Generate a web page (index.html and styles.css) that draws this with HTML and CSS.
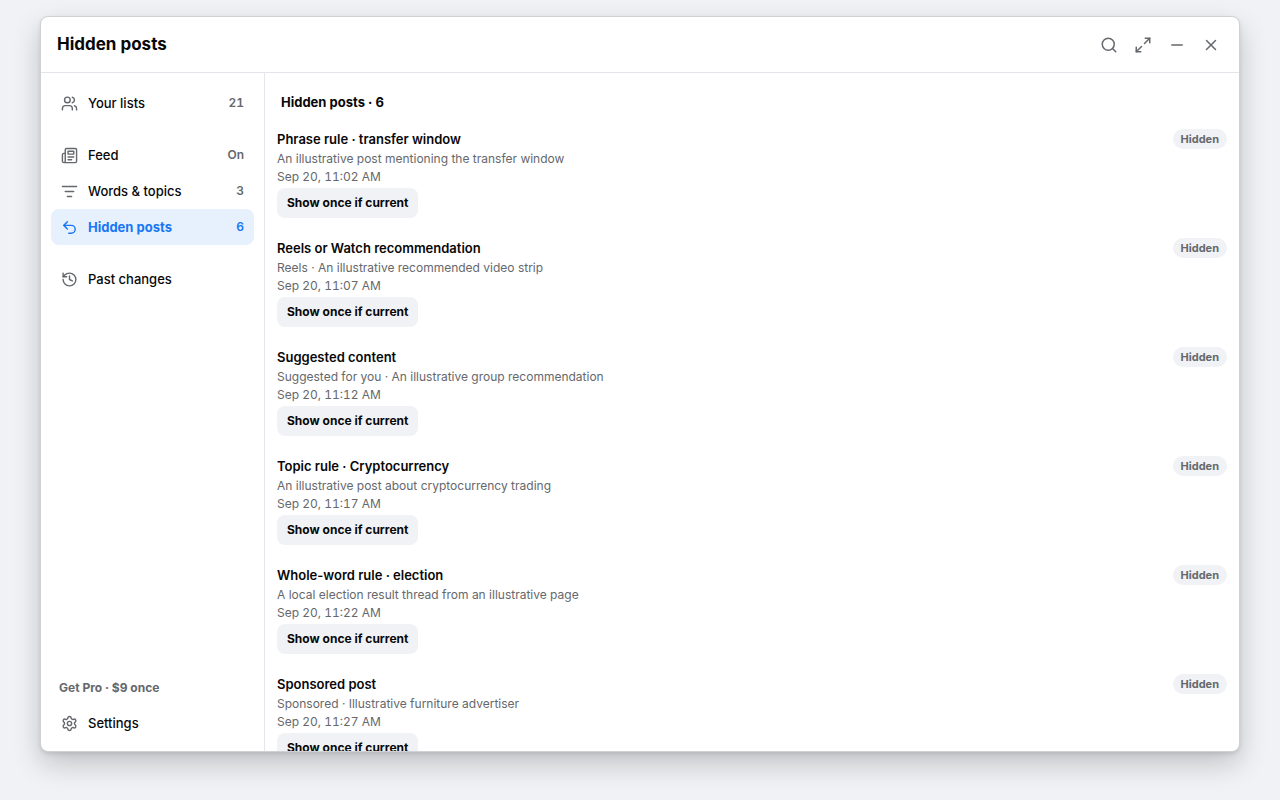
FILE: index.html
```
<!DOCTYPE html>
<html lang="en">
<head>
    <meta charset="UTF-8">
    <meta name="viewport" content="width=device-width, initial-scale=1.0">
    <title>Hidden posts</title>
    <link rel="stylesheet" href="styles.css">
</head>
<body>
    <div class="window">
        <header class="window-header">
            <h1>Hidden posts</h1>
            <div class="window-actions">
                <button class="icon-button" type="button" aria-label="Search">
                    <svg class="icon" viewBox="0 0 24 24"><circle cx="11" cy="11" r="8"/><path d="m21 21-4.3-4.3"/></svg>
                </button>
                <button class="icon-button" type="button" aria-label="Expand">
                    <svg class="icon" viewBox="0 0 24 24"><path d="M15 3h6v6"/><path d="M9 21H3v-6"/><path d="m21 3-7 7"/><path d="m3 21 7-7"/></svg>
                </button>
                <button class="icon-button" type="button" aria-label="Minimize">
                    <svg class="icon" viewBox="0 0 24 24"><path d="M5 12h14"/></svg>
                </button>
                <button class="icon-button" type="button" aria-label="Close">
                    <svg class="icon" viewBox="0 0 24 24"><path d="M18 6 6 18"/><path d="m6 6 12 12"/></svg>
                </button>
            </div>
        </header>

        <div class="window-body">
            <nav class="sidebar">
                <div class="nav-group">
                    <button class="nav-item" type="button">
                        <svg class="icon" viewBox="0 0 24 24"><path d="M16 21v-2a4 4 0 0 0-4-4H6a4 4 0 0 0-4 4v2"/><circle cx="9" cy="7" r="4"/><path d="M22 21v-2a4 4 0 0 0-3-3.870"/><path d="M16 3.130a4 4 0 0 1 0 7.750"/></svg>
                        <span class="nav-label">Your lists</span>
                        <span class="nav-value">21</span>
                    </button>
                </div>
                <div class="nav-group">
                    <button class="nav-item" type="button">
                        <svg class="icon" viewBox="0 0 24 24"><path d="M4 22h16a2 2 0 0 0 2-2V4a2 2 0 0 0-2-2H8a2 2 0 0 0-2 2v16a2 2 0 0 1-4 0v-9a2 2 0 0 1 2-2h2"/><path d="M18 14h-8"/><path d="M15 18h-5"/><path d="M10 6h8v4h-8z"/></svg>
                        <span class="nav-label">Feed</span>
                        <span class="nav-value">On</span>
                    </button>
                    <button class="nav-item" type="button">
                        <svg class="icon" viewBox="0 0 24 24"><path d="M2 5h20"/><path d="M6 12h12"/><path d="M9 19h6"/></svg>
                        <span class="nav-label">Words &amp; topics</span>
                        <span class="nav-value">3</span>
                    </button>
                    <button class="nav-item active" type="button" aria-current="page">
                        <svg class="icon" viewBox="0 0 24 24"><path d="M9 14 4 9l5-5"/><path d="M4 9h10.500a5.500 5.500 0 0 1 0 11H11"/></svg>
                        <span class="nav-label">Hidden posts</span>
                        <span class="nav-value">6</span>
                    </button>
                </div>
                <div class="nav-group">
                    <button class="nav-item" type="button">
                        <svg class="icon" viewBox="0 0 24 24"><path d="M3 12a9 9 0 1 0 9-9 9.750 9.750 0 0 0-6.740 2.740L3 8"/><path d="M3 3v5h5"/><path d="M12 7v5l4 2"/></svg>
                        <span class="nav-label">Past changes</span>
                    </button>
                </div>
                <div class="nav-footer">
                    <button class="pro-button" type="button">Get Pro · $9 once</button>
                    <button class="nav-item" type="button">
                        <svg class="icon" viewBox="0 0 24 24"><path d="M9.671 4.136a2.340 2.340 0 0 1 4.659 0 2.340 2.340 0 0 0 3.319 1.915 2.340 2.340 0 0 1 2.330 4.033 2.340 2.340 0 0 0 0 3.831 2.340 2.340 0 0 1-2.330 4.033 2.340 2.340 0 0 0-3.319 1.915 2.340 2.340 0 0 1-4.659 0 2.340 2.340 0 0 0-3.320-1.915 2.340 2.340 0 0 1-2.330-4.033 2.340 2.340 0 0 0 0-3.831A2.340 2.340 0 0 1 6.350 6.051a2.340 2.340 0 0 0 3.319-1.915"/><circle cx="12" cy="12" r="3"/></svg>
                        <span class="nav-label">Settings</span>
                    </button>
                </div>
            </nav>

            <main class="content">
                <h2>Hidden posts · 6</h2>
                <ul class="post-list">
                    <li class="post">
                        <div class="post-info">
                            <h3>Phrase rule · transfer window</h3>
                            <p>An illustrative post mentioning the transfer window</p>
                            <p class="post-date">Sep 20, 11:02 AM</p>
                            <button class="show-button" type="button">Show once if current</button>
                        </div>
                        <span class="badge">Hidden</span>
                    </li>
                    <li class="post">
                        <div class="post-info">
                            <h3>Reels or Watch recommendation</h3>
                            <p>Reels · An illustrative recommended video strip</p>
                            <p class="post-date">Sep 20, 11:07 AM</p>
                            <button class="show-button" type="button">Show once if current</button>
                        </div>
                        <span class="badge">Hidden</span>
                    </li>
                    <li class="post">
                        <div class="post-info">
                            <h3>Suggested content</h3>
                            <p>Suggested for you · An illustrative group recommendation</p>
                            <p class="post-date">Sep 20, 11:12 AM</p>
                            <button class="show-button" type="button">Show once if current</button>
                        </div>
                        <span class="badge">Hidden</span>
                    </li>
                    <li class="post">
                        <div class="post-info">
                            <h3>Topic rule · Cryptocurrency</h3>
                            <p>An illustrative post about cryptocurrency trading</p>
                            <p class="post-date">Sep 20, 11:17 AM</p>
                            <button class="show-button" type="button">Show once if current</button>
                        </div>
                        <span class="badge">Hidden</span>
                    </li>
                    <li class="post">
                        <div class="post-info">
                            <h3>Whole-word rule · election</h3>
                            <p>A local election result thread from an illustrative page</p>
                            <p class="post-date">Sep 20, 11:22 AM</p>
                            <button class="show-button" type="button">Show once if current</button>
                        </div>
                        <span class="badge">Hidden</span>
                    </li>
                    <li class="post">
                        <div class="post-info">
                            <h3>Sponsored post</h3>
                            <p>Sponsored · Illustrative furniture advertiser</p>
                            <p class="post-date">Sep 20, 11:27 AM</p>
                            <button class="show-button" type="button">Show once if current</button>
                        </div>
                        <span class="badge">Hidden</span>
                    </li>
                </ul>
            </main>
        </div>
    </div>
</body>
</html>
```

FILE: styles.css
```
* {
    box-sizing: border-box;
}
body {
    margin: 0;
    height: 100vh;
    padding: 16px 40px 48px;
    background: #f0f2f5;
    color: #080809;
    font-family: Inter, "Liberation Sans", sans-serif;
    font-size: 13px;
}
h1, h2, h3, p, ul {
    margin: 0;
    padding: 0;
}
button {
    border: none;
    background: none;
    font: inherit;
    color: inherit;
    cursor: pointer;
}
.window {
    display: flex;
    flex-direction: column;
    height: 100%;
    background: #fff;
    border: 1px solid #ced0d4;
    border-radius: 8px;
    box-shadow: 0 12px 28px rgba(0, 0, 0, 0.2), 0 2px 4px rgba(0, 0, 0, 0.1);
    overflow: hidden;
}
.window-header {
    display: flex;
    align-items: center;
    justify-content: space-between;
    height: 56px;
    flex-shrink: 0;
    padding: 0 12px 0 16px;
    border-bottom: 1px solid #e4e6eb;
}
h1 {
    padding-bottom: 2px;
    font-size: 17px;
    line-height: 22px;
    font-weight: 700;
}
.window-actions {
    display: flex;
    gap: 2px;
}
.icon-button {
    display: flex;
    align-items: center;
    justify-content: center;
    width: 32px;
    height: 32px;
    padding: 0;
    border-radius: 8px;
    color: #65686c;
}
.icon {
    width: 17px;
    height: 17px;
    flex-shrink: 0;
    fill: none;
    stroke: currentColor;
    stroke-width: 2;
    stroke-linecap: round;
    stroke-linejoin: round;
}
.icon-button .icon {
    width: 18px;
    height: 18px;
}
.window-body {
    display: flex;
    flex: 1;
    min-height: 0;
}

/* Sidebar */
.sidebar {
    display: flex;
    flex-direction: column;
    gap: 16px;
    width: 224px;
    flex-shrink: 0;
    padding: 12px 10px 10px;
    border-right: 1px solid #e4e6eb;
}
.nav-item {
    display: flex;
    align-items: center;
    gap: 10px;
    width: 100%;
    height: 36px;
    padding: 0 10px;
    border-radius: 8px;
    font-weight: 500;
    text-align: left;
}
.nav-item .icon {
    color: #65686c;
}
.nav-label {
    flex: 1;
}
.nav-value {
    padding-bottom: 2px;
    font-size: 12px;
    font-weight: 600;
    font-variant-numeric: tabular-nums;
    color: #65686c;
}
.nav-item.active {
    background: #e7f0fd;
    font-weight: 700;
}
.nav-item.active,
.nav-item.active .icon,
.nav-item.active .nav-value {
    color: #1877f2;
}
.nav-footer {
    margin-top: auto;
}
.pro-button {
    display: block;
    height: 36px;
    padding: 0 8px;
    font-size: 12px;
    font-weight: 700;
    color: #65686c;
}

/* Post list */
.content {
    flex: 1;
    min-width: 0;
    overflow: auto;
    scrollbar-width: none;
    padding-top: 20px;
}
h2 {
    padding: 0 16px 8px;
    font-size: 13px;
    line-height: 18px;
    font-weight: 700;
}
.post-list {
    list-style: none;
}
.post {
    display: flex;
    align-items: flex-start;
    justify-content: space-between;
    gap: 12px;
    padding: 10px 12px;
}
h3 {
    margin-bottom: 1px;
    font-size: 13px;
    line-height: 20px;
    font-weight: 600;
}
.post p {
    font-size: 12px;
    line-height: 18px;
    color: #65686c;
}
.post-date {
    font-variant-numeric: tabular-nums;
}
.show-button {
    display: block;
    height: 30px;
    margin-top: 2px;
    padding: 0 10px 2px;
    border-radius: 8px;
    background: #f0f2f5;
    font-size: 12px;
    font-weight: 700;
}
.badge {
    padding: 0 8px;
    border-radius: 10px;
    background: #f0f2f5;
    font-size: 11px;
    line-height: 20px;
    font-weight: 700;
    color: #65686c;
}
```
